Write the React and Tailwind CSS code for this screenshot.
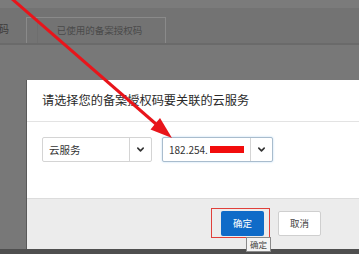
import React from "react";

const Chevron = () => (
  <svg width="9" height="9" viewBox="0 0 10 10" fill="none">
    <path d="M2 3.5 L5 6.5 L8 3.5" stroke="#333" strokeWidth="1.8" strokeLinecap="round" strokeLinejoin="round" />
  </svg>
);

const Select = ({ children, focused }) => (
  <div
    className={`flex h-[25px] rounded-[2px] border bg-white ${
      focused ? "w-[111px] border-[#a9bccd] shadow-[0_0_2px_rgba(102,175,233,0.5)]" : "w-[110px] border-[#d4d4d4]"
    }`}
  >
    <div className="flex flex-1 items-center pl-[6px] text-[10.5px] text-[#333]">{children}</div>
    <div className="flex w-[22px] items-center justify-center border-l border-[#d4d4d4]">
      <Chevron />
    </div>
  </div>
);

export default function App() {
  return (
    <div
      className="relative h-[254px] w-[359px] overflow-hidden bg-[#787878]"
      style={{ fontFamily: '"Noto Sans CJK SC", "Noto Sans", sans-serif' }}
    >
      {/* page behind the overlay */}
      <div className="h-2 bg-[#7b7b7b]" />
      <div className="flex h-[35px] items-end bg-[#737373]">
        <div className="flex h-[30px] w-[25px] items-center text-[10px] text-[#3a3a3a]">
          <span className="-ml-[1px]">码</span>
        </div>
        <div className="ml-[1px] flex h-[26px] w-[140px] items-stretch border border-b-0 border-[#8a8a8a] pl-[10px]">
          <div className="flex flex-1 items-center justify-center border-l border-[#6e6e6e] pr-[4px] text-[9.5px] text-[#4a4a4a]">
            已使用的备案授权码
          </div>
        </div>
      </div>
      <div className="h-[2px] bg-[#6a6a6a]" />

      {/* dialog */}
      <div className="mt-[35px] pl-[26px]">
        <div className="flex h-[169px] w-[340px] flex-col border-l border-[#5a5a5a] bg-white">
          <div className="flex h-[42px] items-center border-b border-[#e3e3e3] pl-[15px] text-[12.2px] text-[#2a2a2a]">
            请选择您的备案授权码要关联的云服务
          </div>
          <div className="flex h-[77px] gap-[10px] border-b border-[#dcdcdc] pl-[15px] pt-[15px]">
            <Select>云服务</Select>
            <Select focused>
              <span className="text-[10px]">182.254.</span>
              <span className="ml-[2px] h-[7px] w-[34px] bg-[#f20d0d]" />
            </Select>
          </div>
          <div className="flex flex-1 justify-end gap-[14px] bg-[#ececec] pr-[45px] pt-[12px]">
            <div className="relative">
              <div className="absolute -left-[10px] -right-[6px] -top-[3px] h-[30px] border border-[#e0403a]" />
              <div className="relative flex h-[25px] w-[43px] items-center justify-center rounded-[2px] bg-[#0f6bc8] text-[9.5px] text-white">
                确定
              </div>
              <div className="absolute left-[25px] top-[26px] whitespace-nowrap border border-[#8a8a8a] bg-[#f4f4f4] px-[3px] text-[8.5px] leading-[13px] text-[#444]">
                确定
              </div>
            </div>
            <div className="flex h-[25px] w-[43px] items-center justify-center rounded-[2px] border border-[#cfcfcf] bg-white text-[9.5px] text-[#444]">
              取消
            </div>
          </div>
        </div>
      </div>
      <div className="h-[5px] bg-[#4f4f4f]" />

      {/* red annotation arrow */}
      <svg className="pointer-events-none absolute left-0 top-0" width="359" height="254">
        <line x1="11" y1="-2" x2="156" y2="124" stroke="#e8151b" strokeWidth="3" />
        <polygon points="172,138 150.5,129.5 160,118" fill="#e8151b" />
      </svg>
    </div>
  );
}
